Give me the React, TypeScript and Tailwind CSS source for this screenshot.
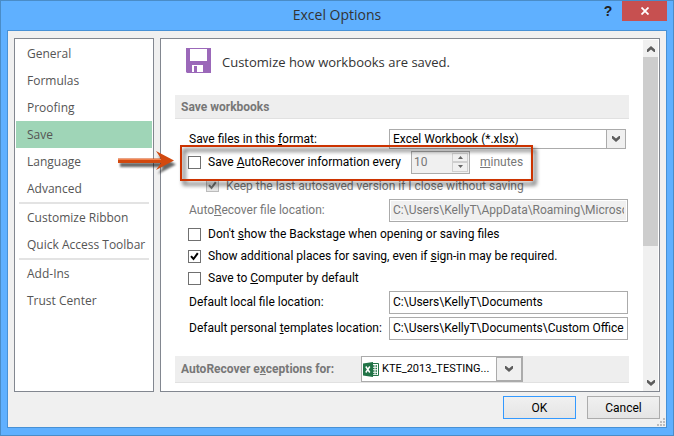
import React from 'react'

const groups = [
  ['General', 'Formulas', 'Proofing', 'Save', 'Language', 'Advanced'],
  ['Customize Ribbon', 'Quick Access Toolbar'],
  ['Add-Ins', 'Trust Center'],
]

function Chevron({ up = false }: { up?: boolean }) {
  return (
    <svg width="8" height="6" viewBox="0 0 8 6" className={up ? 'rotate-180' : ''} aria-hidden="true">
      <path d="M0 0h1l3 2.600l3-2.600h1v2.600l-4 3.400l-4-3.400z" fill="#5c5c5c" />
    </svg>
  )
}

function CheckBox({ id, checked = false, disabled = false }: { id: string; checked?: boolean; disabled?: boolean }) {
  return (
    <span className="relative flex size-[13px] shrink-0">
      <input
        id={id}
        type="checkbox"
        defaultChecked={checked}
        disabled={disabled}
        className="peer size-[13px] appearance-none border border-[#707070] bg-white disabled:border-[#bcbcbc] disabled:bg-[#e6e6e6]"
      />
      <svg
        viewBox="0 0 13 13"
        className="pointer-events-none absolute inset-0 hidden size-[13px] text-black peer-checked:block peer-disabled:text-[#707070]"
        aria-hidden="true"
      >
        <path d="M3 6.200l2.500 2.800l4.300-5.800" fill="none" stroke="currentColor" strokeWidth="2" />
      </svg>
    </span>
  )
}

function FloppyIcon() {
  return (
    <svg width="25" height="25" viewBox="0 0 25 25" aria-hidden="true" className="shrink-0">
      <path d="M0 0h25v25H1l-1-1z" fill="#9b68b9" />
      <path d="M4 1h17v12H4zM6 17h11v7H6z" fill="#fff" />
      <path d="M8 18h3v6H8z" fill="#9b68b9" />
    </svg>
  )
}

function ExcelIcon() {
  return (
    <svg width="16" height="15" viewBox="0 0 16 15" aria-hidden="true">
      <path d="M8.500 1.500h7v12h-7z" fill="#fff" stroke="#217346" />
      <path d="M10 4h4M10 6.500h4M10 9h4M10 11.500h4" stroke="#217346" strokeWidth="1.500" strokeDasharray="1.500 1" />
      <path d="M0 1.500L10 0v15L0 13.500z" fill="#217346" />
      <path d="M2.800 4.500l4 6M6.800 4.500l-4 6" stroke="#fff" strokeWidth="1.500" />
    </svg>
  )
}

function Arrow() {
  return (
    <svg
      width="60"
      height="24"
      viewBox="0 0 60 24"
      className="pointer-events-none absolute top-0 -left-[71px] drop-shadow-[2px_4px_1px_rgba(0,0,0,0.6)]"
      aria-hidden="true"
    >
      <path d="M1 8.500h43L39 1l18 9.500L39 20l5-7H1z" fill="#d2490f" />
      <path d="M1 9.500h43" stroke="#f0834f" />
    </svg>
  )
}

const fieldClass =
  'h-[23px] min-w-0 flex-1 border border-[#ababab] bg-white px-[3px] text-xs text-black disabled:bg-[#f0f0f0] disabled:text-[#777] disabled:ring-1 disabled:ring-white disabled:ring-inset'

function PathRow({ id, value, disabled = false, children }: { id: string; value: string; disabled?: boolean; children: React.ReactNode }) {
  return (
    <div className="flex h-[26px] items-center pr-px">
      <label htmlFor={id} className={`w-[201px] shrink-0 pl-px ${disabled ? 'text-[#777]' : ''}`}>
        {children}
      </label>
      <input id={id} type="text" defaultValue={value} disabled={disabled} className={fieldClass} />
    </div>
  )
}

export default function App() {
  return (
    <div className="flex min-h-screen flex-col border border-[#4a8cc7] bg-[#5fb0ff] px-[6px] pb-[7px] font-[Roboto,'Open_Sans',sans-serif] text-xs text-black">
      {/* Title bar */}
      <header className="relative flex h-[29px] shrink-0 items-center justify-center">
        <h1 className="font-['Open_Sans',sans-serif] text-[14px] text-[#333]">Excel Options</h1>
        <div className="absolute top-0 right-0 flex h-[20px]">
          <button type="button" aria-label="Help" className="w-[28px] font-['Liberation_Sans',sans-serif] text-[14px] font-bold text-[#222]">
            ?
          </button>
          <button type="button" aria-label="Close" className="flex w-[45px] items-center justify-center bg-[#c75050]">
            <svg width="8" height="8" viewBox="0 0 8 8" aria-hidden="true">
              <path d="M0.500 0.500l7 7M7.500 0.500l-7 7" stroke="#fff" strokeWidth="1.800" />
            </svg>
          </button>
        </div>
      </header>

      <div className="relative flex flex-1 flex-col border border-[#4791d6] bg-[#f0f0f0] px-[6px] pt-[7px]">
        <div className="flex flex-1 gap-[6px]">
          {/* Categories */}
          <nav className="w-[140px] shrink-0 border border-[#828790] bg-white px-px pt-px font-['Open_Sans',sans-serif]">
            {groups.map((group, i) => (
              <ul key={group[0]}>
                {i > 0 && <li className="mx-[3px] h-[2px] bg-[#e3e3e3]" role="separator" />}
                {group.map((name) => (
                  <li key={name}>
                    <button
                      type="button"
                      className={`block h-[27px] w-full px-[11px] text-left whitespace-nowrap text-[#555] ${name === 'Save' ? 'bg-[#9fd5b7]' : ''}`}
                    >
                      {name}
                    </button>
                  </li>
                ))}
              </ul>
            ))}
          </nav>

          <main className="flex min-w-0 flex-1 border border-[#828790] bg-white pr-px">
            <div className="min-w-0 flex-1 pr-[14px] pb-[8px] pl-[14px]">
              <div className="flex h-[56px] gap-[11px] pt-[9px] pl-[11px]">
                <FloppyIcon />
                <h2 className="h-[25px] font-['Open_Sans',sans-serif] text-[13px] leading-[28px] whitespace-nowrap text-[#333]">
                  Customize how workbooks are saved.
                </h2>
              </div>

              <h3 className="flex h-[24px] items-center border-b border-[#e1e1e1] bg-[#eee] px-[6px] font-bold text-[#777]">Save workbooks</h3>

              <div className="pt-[8px] pl-[13px] whitespace-nowrap">
                <div className="flex h-[23px] items-center pr-[3px]">
                  <label htmlFor="format" className="w-[201px] shrink-0 pl-px">
                    Save files in this <u>f</u>ormat:
                  </label>
                  <div className="relative min-w-0 flex-1">
                    <select id="format" className="block h-[20px] w-full appearance-none border border-[#ababab] bg-white px-[3px]">
                      <option>Excel Workbook (*.xlsx)</option>
                    </select>
                    <span className="pointer-events-none absolute inset-y-0 right-0 flex w-[20px] items-center justify-center border border-[#ababab] bg-[#f0f0f0]">
                      <Chevron />
                    </span>
                  </div>
                </div>

                <div className="relative flex h-[24px] items-center">
                  <CheckBox id="recover" />
                  <label htmlFor="recover" className="w-[210px] shrink-0 pl-[7px]">
                    Save <u>A</u>utoRecover information every
                  </label>
                  <div className="flex h-[23px] w-[59px] border border-[#ababab] bg-[#f0f0f0] p-px">
                    <input id="minutes" type="text" inputMode="numeric" defaultValue="10" disabled className="w-[39px] pl-px text-[#777]" />
                    <div className="flex flex-1 flex-col">
                      <button type="button" disabled aria-label="Increase" className="flex flex-1 items-center justify-center border border-[#cfcfcf]">
                        <svg width="5" height="3" viewBox="0 0 5 3" aria-hidden="true">
                          <path d="M0 3L2.500 0L5 3z" fill="#666" />
                        </svg>
                      </button>
                      <button type="button" disabled aria-label="Decrease" className="flex flex-1 items-center justify-center border border-[#cfcfcf]">
                        <svg width="5" height="3" viewBox="0 0 5 3" aria-hidden="true">
                          <path d="M0 0L2.500 3L5 0z" fill="#666" />
                        </svg>
                      </button>
                    </div>
                  </div>
                  <label htmlFor="minutes" className="pl-[10px] text-[#777]">
                    <u>m</u>inutes
                  </label>
                  {/* Callout */}
                  <div className="pointer-events-none absolute -top-[5px] -left-[8px] z-10 h-[36px] w-[353px] border-2 border-[#cc3300] drop-shadow-[3px_4px_2px_rgba(0,0,0,0.8)]" />
                  <Arrow />
                </div>

                <div className="flex h-[23px] items-center pl-[18px]">
                  <CheckBox id="keep" checked disabled />
                  <label htmlFor="keep" className="pl-[7px] text-[#777]">
                    Keep the last autosaved version if I close without saving
                  </label>
                </div>

                <PathRow id="recover-path" value="C:\Users\KellyT\AppData\Roaming\Microsoft\Excel\" disabled>
                  Auto<u>R</u>ecover file location:
                </PathRow>

                <div className="flex h-[22px] items-center">
                  <CheckBox id="backstage" />
                  <label htmlFor="backstage" className="pl-[7px]">
                    Don't <u>s</u>how the Backstage when opening or saving files
                  </label>
                </div>
                <div className="flex h-[22px] items-center">
                  <CheckBox id="places" checked />
                  <label htmlFor="places" className="pl-[7px]">
                    Show additional places for saving, even if <u>s</u>ign-in may be required.
                  </label>
                </div>
                <div className="flex h-[22px] items-center">
                  <CheckBox id="computer" />
                  <label htmlFor="computer" className="pl-[7px]">
                    Save to <u>C</u>omputer by default
                  </label>
                </div>

                <PathRow id="local" value="C:\Users\KellyT\Documents">
                  Default local f<u>i</u>le location:
                </PathRow>
                <PathRow id="templates" value="C:\Users\KellyT\Documents\Custom Office Templates\">
                  Default personal <u>t</u>emplates location:
                </PathRow>
              </div>

              <div className="mt-[15px] flex h-[27px] items-center border-b border-[#e1e1e1] bg-[#eee] pl-[6px] font-bold text-[#777]">
                <label htmlFor="exceptions" className="w-[180px] shrink-0">
                  AutoRecover e<u>x</u>ceptions for:
                </label>
                <div className="relative w-[162px] font-normal text-black">
                  <select id="exceptions" className="block h-[26px] w-full appearance-none border border-[#ababab] bg-white pl-[20px] text-[11px]">
                    <option>KTE_2013_TESTING...</option>
                  </select>
                  <span className="pointer-events-none absolute inset-y-0 left-[2px] flex items-center">
                    <ExcelIcon />
                  </span>
                  <span className="pointer-events-none absolute inset-y-0 right-0 flex w-[27px] items-center justify-center border-2 border-l border-[#ababab] bg-[#f0f0f0]">
                    <Chevron />
                  </span>
                </div>
              </div>
            </div>

            {/* Scroll bar */}
            <div className="mt-px flex w-[15px] shrink-0 flex-col bg-[#f0f0f0]">
              <button type="button" aria-label="Scroll up" className="flex h-[17px] items-center justify-center">
                <Chevron up />
              </button>
              <div className="flex-1">
                <div className="h-[189px] bg-[#cdcdcd]" />
              </div>
              <button type="button" aria-label="Scroll down" className="flex h-[17px] items-center justify-center">
                <Chevron />
              </button>
            </div>
          </main>
        </div>

        <footer className="flex h-[35px] shrink-0 items-start justify-end gap-[11px] pt-[4px]">
          <button type="button" className="h-[23px] w-[73px] border border-[#3399ff] bg-linear-to-b from-[#f0f0f0] to-[#e5e5e5]">
            OK
          </button>
          <button type="button" className="h-[23px] w-[73px] border border-[#acacac] bg-linear-to-b from-[#f0f0f0] to-[#e5e5e5]">
            Cancel
          </button>
        </footer>
        <svg width="8" height="8" viewBox="0 0 8 8" className="absolute right-px bottom-px" aria-hidden="true">
          <path d="M6 0h2v2H6zM3 3h2v2H3zM6 3h2v2H6zM0 6h2v2H0zM3 6h2v2H3zM6 6h2v2H6z" fill="#bdbdbd" />
        </svg>
      </div>
    </div>
  )
}
